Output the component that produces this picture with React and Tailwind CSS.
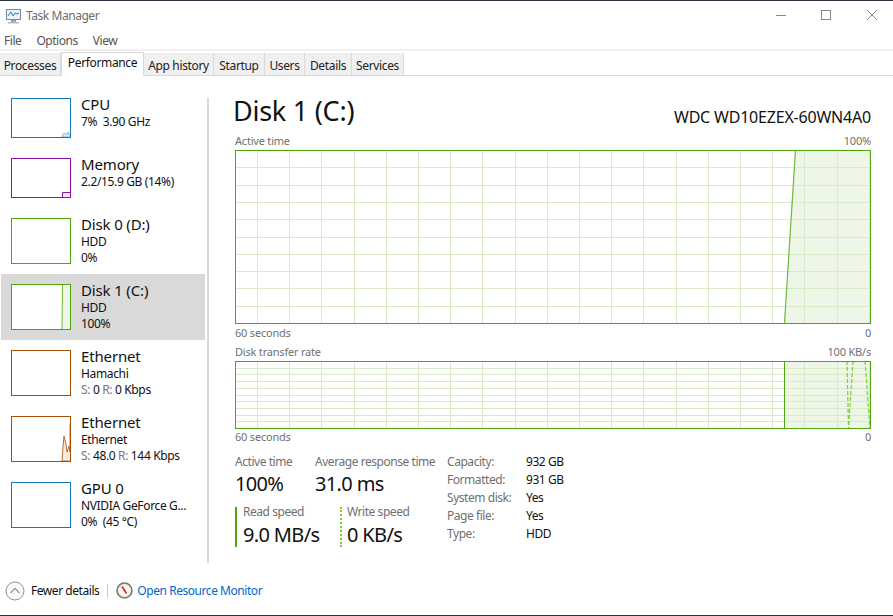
const green = "#4da60c";
const grid = "#d9eac7";

function hLines(w, h, n) {
  const out = [];
  for (let i = 1; i < n; i++) {
    const y = Math.round((i * (h - 1)) / n) + 0.5;
    out.push(<line key={"h" + i} x1="0" x2={w} y1={y} y2={y} stroke={grid} />);
  }
  return out;
}
const vxs = [];
for (let i = 0; i < 20; i++) vxs.push(Math.round(22 + i * 32.2) + 0.5);
function vLines(h) {
  return vxs.map((x) => <line key={"v" + x} x1={x} x2={x} y1="0" y2={h} stroke={grid} />);
}

function ActiveChart() {
  return (
    <svg width="636" height="174" className="block">
      <polygon points="549,173 560,0 636,0 636,173" fill="#eef6e8" />
      {hLines(636, 174, 10)}
      {vLines(174)}
      <line x1="549.5" y1="173" x2="560.5" y2="0" stroke="#6dbb3a" strokeWidth="1.2" />
      <rect x="0.5" y="0.5" width="635" height="173" fill="none" stroke={green} />
    </svg>
  );
}

function RateChart() {
  return (
    <svg width="636" height="68" className="block">
      <rect x="549" y="0" width="87" height="68" fill="#eef6e8" />
      {hLines(636, 68, 10)}
      {vLines(68)}
      <line x1="549.5" y1="0" x2="549.5" y2="68" stroke={green} />
      <line x1="612" y1="0" x2="613.5" y2="67" stroke="#7ccf30" strokeWidth="1.2" strokeDasharray="4 2" />
      <line x1="618" y1="0" x2="613.5" y2="67" stroke="#7ccf30" strokeWidth="1.2" strokeDasharray="4 2" />
      <line x1="630" y1="0" x2="635" y2="67" stroke="#7ccf30" strokeWidth="1.2" strokeDasharray="4 2" />
      <rect x="0.5" y="0.5" width="635" height="67" fill="none" stroke={green} />
    </svg>
  );
}

function Thumb({ color, h, children }) {
  return (
    <svg width="60" height={h} className="block shrink-0 bg-white">
      {children}
      <rect x="0.5" y="0.5" width="59" height={h - 1} fill="none" stroke={color} />
    </svg>
  );
}

function Item({ title, sub, third, color, h, rowH, thumb, selected }) {
  return (
    <div
      className={`flex items-center ml-px w-[204px] pl-[10px] relative ${selected ? "bg-[#d9d9d9]" : ""}`}
      style={{ height: rowH }}
    >
      <Thumb color={color} h={h}>{thumb}</Thumb>
      <div className="ml-[10px] self-start pt-[7px] flex flex-col whitespace-pre tracking-[-0.35px]">
        <div className="text-[15px] leading-[19px] tracking-[-0.15px] text-[#111]">{title}</div>
        <div className="text-[12px] leading-[16px] text-[#111]">{sub}</div>
        {third && <div className="text-[12px] leading-[15px] text-[#111]">{third}</div>}
      </div>
    </div>
  );
}

const Net = ({ s, r }) => (
  <span>
    <span className="text-[#777]">S:</span> {s} <span className="text-[#777]">R:</span> {r} Kbps
  </span>
);

function Tab({ children, active, w }) {
  return active ? (
    <div
      className="h-[24px] -mt-[2px] border border-b-0 border-[#d9d9d9] bg-white text-[12px] leading-[20px] tracking-[-0.35px] text-center text-[#111] relative top-px"
      style={{ width: w }}
    >
      {children}
    </div>
  ) : (
    <div
      className="h-[22px] border-r border-[#d9d9d9] bg-[#f0f0f0] text-[12px] leading-[26px] tracking-[-0.35px] text-center text-[#222]"
      style={{ width: w }}
    >
      {children}
    </div>
  );
}

function Stat({ label, value, className }) {
  return (
    <div className={className}>
      <div className="text-[12px] leading-[16px] text-[#707070] whitespace-nowrap">{label}</div>
      <div className="text-[20px] leading-[28px] tracking-[-0.65px] text-[#111] whitespace-nowrap">{value}</div>
    </div>
  );
}

export default function App() {
  return (
    <div
      className="w-[893px] h-[616px] flex flex-col bg-white overflow-hidden tracking-[-0.45px]"
      style={{ fontFamily: '"Noto Sans", sans-serif' }}
    >
      <div className="h-px bg-[#2b2f3f]" />
      {/* title */}
      <div className="h-[30px] flex items-center pl-[5px]">
        <svg width="17" height="16" viewBox="0 0 17 16">
          <rect x="1.5" y="1.5" width="14" height="10" fill="#eaf3fa" stroke="#7b8a94" />
          <path d="M3 8 L6 4 L8 8 L10 5 L12 6 L14 5" fill="none" stroke="#2f7fb8" />
          <rect x="6" y="12" width="5" height="2" fill="#9aa3a9" />
          <rect x="3" y="14" width="11" height="1.5" fill="#b5bcc1" />
        </svg>
        <span className="ml-[4px] text-[12px] text-[#6d6d6d]">Task Manager</span>
        <div className="ml-auto flex items-center -mt-[2px]">
          <svg width="12" height="12" className="mr-[33px]"><line x1="1" x2="11" y1="6.5" y2="6.5" stroke="#8a8a8a" /></svg>
          <svg width="12" height="12" className="mr-[34px]"><rect x="1.5" y="1.5" width="9" height="9" fill="none" stroke="#8a8a8a" /></svg>
          <svg width="12" height="12" className="mr-[15px]"><path d="M1 1 L11 11 M11 1 L1 11" stroke="#8a8a8a" /></svg>
        </div>
      </div>
      {/* menu */}
      <div className="h-[18px] flex items-center pl-[4px] pt-px gap-[15px] text-[12px] text-[#555]">
        <span>File</span>
        <span>Options</span>
        <span>View</span>
      </div>
      <div className="h-[2px] bg-[#f0f0f0]" />
      <div className="h-[2px]" />
      {/* tabs */}
      <div className="h-[23px] flex items-start border-b border-[#d9d9d9] bg-white pt-0">
        <Tab w={61}>Processes</Tab>
        <Tab active w={83}>Performance</Tab>
        <Tab w={70}>App history</Tab>
        <Tab w={51}>Startup</Tab>
        <Tab w={40}>Users</Tab>
        <Tab w={47}>Details</Tab>
        <Tab w={52}>Services</Tab>
      </div>
      {/* body */}
      <div className="h-[487px] flex">
        <div className="w-[209px] shrink-0 flex flex-col pt-[12px] relative">
          <Item title="CPU" sub="7%  3.90 GHz" color="#1379b4" h={40} rowH={60}
            thumb={<path d="M51 39 L52 36 L54 35 L56 37 L57 34 L59 37 L60 39 Z" fill="#d5e8f3" stroke="#6aa9cf" strokeWidth="0.7" />} />
          <Item title="Memory" sub="2.2/15.9 GB (14%)" color="#8b12ae" h={40} rowH={60}
            thumb={<path d="M51.5 40 V34.5 H60 V40 Z" fill="#f4e9f7" stroke="#8b12ae" />} />
          <Item title="Disk 0 (D:)" sub="HDD" third="0%" color={green} h={46} rowH={66} />
          <Item title="Disk 1 (C:)" sub="HDD" third="100%" color={green} h={46} rowH={66} selected
            thumb={<g><rect x="51" y="0" width="9" height="46" fill="#eef6e8" /><line x1="51.5" x2="51" y1="1" y2="45" stroke="#6dbb3a" /></g>} />
          <Item title="Ethernet" sub="Hamachi" third={<Net s="0" r="0" />} color="#a74f01" h={46} rowH={66} />
          <Item title="Ethernet" sub="Ethernet" third={<Net s="48.0" r="144" />} color="#a74f01" h={46} rowH={66}
            thumb={<path d="M51 45 L52 31 L53 20 L55 28 L56 36 L58 30 L59 36 L59 8 L60 5 V45 Z" fill="#f8ebe0" stroke="#a74f01" strokeWidth="0.8" />} />
          <Item title="GPU 0" sub="NVIDIA GeForce G..." third="0%  (45 °C)" color="#1379b4" h={46} rowH={66} />
          <div className="absolute right-0 top-[22px] bottom-0 w-[2px] bg-[#dadada]" />
        </div>
        {/* main */}
        <div className="flex-1 pl-[26px] pr-[22px] flex flex-col pt-[19px]">
          <div className="flex items-end justify-between h-[36px] pb-[2px]">
            <div className="text-[27px] leading-[36px] text-[#111] tracking-[-0.25px] -ml-[2px]">Disk 1 (C:)</div>
            <div className="text-[16px] leading-[24px] text-[#111] tracking-[-0.2px]">WDC WD10EZEX-60WN4A0</div>
          </div>
          <div className="flex justify-between mt-[1px] h-[17px] text-[11px] leading-[17px] tracking-[-0.2px] text-[#707070]">
            <span>Active time</span>
            <span>100%</span>
          </div>
          <div className="mt-[1px]"><ActiveChart /></div>
          <div className="flex justify-between h-[18px] text-[11px] leading-[18px] tracking-[-0.2px] text-[#707070]">
            <span>60 seconds</span>
            <span>0</span>
          </div>
          <div className="flex justify-between mt-[1px] h-[18px] text-[11px] leading-[18px] tracking-[-0.2px] text-[#707070]">
            <span>Disk transfer rate</span>
            <span>100 KB/s</span>
          </div>
          <RateChart />
          <div className="flex justify-between h-[16px] text-[11px] leading-[16px] tracking-[-0.2px] text-[#707070]">
            <span>60 seconds</span>
            <span>0</span>
          </div>
          <div className="flex mt-[9px]">
            <div className="w-[212px] flex flex-col">
              <div className="flex">
                <Stat label="Active time" value="100%" className="w-[80px]" />
                <Stat label="Average response time" value="31.0 ms" />
              </div>
              <div className="flex mt-[9px]">
                <div className="w-[105px] h-[40px] border-l-[2px] border-[#4da60c] pl-[6px]">
                  <div className="text-[12px] leading-[10px] text-[#707070]">Read speed</div>
                  <div className="text-[20px] leading-[26px] mt-[5px] tracking-[-0.65px] text-[#111]">9.0 MB/s</div>
                </div>
                <div className="h-[40px] border-l-[2px] border-dotted border-[#7ccf30] pl-[5px]">
                  <div className="text-[12px] leading-[10px] text-[#707070]">Write speed</div>
                  <div className="text-[20px] leading-[26px] mt-[5px] tracking-[-0.65px] text-[#111]">0 KB/s</div>
                </div>
              </div>
            </div>
            <div className="grid grid-cols-[79px_auto] auto-rows-[18px] text-[12px] leading-[16px] text-[#707070]">
              <span>Capacity:</span><span className="text-[#111]">932 GB</span>
              <span>Formatted:</span><span className="text-[#111]">931 GB</span>
              <span>System disk:</span><span className="text-[#111]">Yes</span>
              <span>Page file:</span><span className="text-[#111]">Yes</span>
              <span>Type:</span><span className="text-[#111]">HDD</span>
            </div>
          </div>
        </div>
      </div>
      {/* footer */}
      <div className="flex-1 flex items-center pl-[5px] pt-[4px]">
        <svg width="20" height="20" viewBox="0 0 20 20">
          <circle cx="10" cy="10" r="9" fill="#fafafa" stroke="#8f8f8f" />
          <path d="M5.5 12 L10 7.5 L14.5 12" fill="none" stroke="#9a9a9a" strokeWidth="1.3" />
        </svg>
        <span className="ml-[6px] text-[12px] text-[#111]">Fewer details</span>
        <div className="ml-[8px] w-px h-[14px] bg-[#c8c8c8]" />
        <svg width="17" height="17" viewBox="0 0 17 17" className="ml-[8px] -mt-[2px]">
          <circle cx="8.5" cy="8.5" r="7.5" fill="#ece8e0" stroke="#7a756c" strokeWidth="1.5" />
          <circle cx="8.5" cy="8.5" r="5.2" fill="#fbfaf7" />
          <line x1="6" y1="4.5" x2="10.5" y2="11.5" stroke="#c8281e" strokeWidth="1.6" />
        </svg>
        <span className="ml-[4px] text-[12px] text-[#0066cc]">Open Resource Monitor</span>
      </div>
      <div className="h-px bg-[#2b2f3f]" />
    </div>
  );
}
